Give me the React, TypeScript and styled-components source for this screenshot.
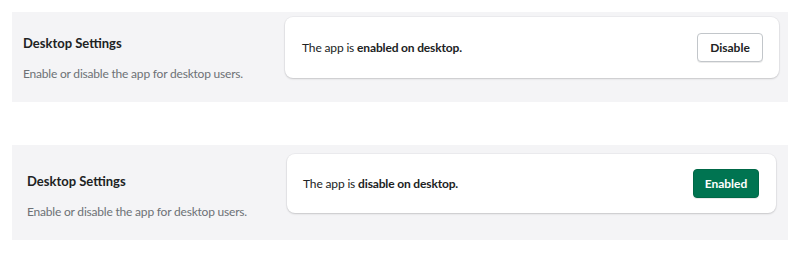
import React from "react";
import styled, { createGlobalStyle } from "styled-components";

const Global = createGlobalStyle`
  html, body { margin: 0; padding: 0; background: #ffffff; }
  body { font-family: Lato, "Open Sans", sans-serif; color: #202223; }
`;

const Page = styled.div`
  display: flex;
  flex-direction: column;
  gap: 43px;
  padding: 12px 12px 0 12px;
`;

const Panel = styled.section<{ $pad: string; $side: number }>`
  display: flex;
  align-items: flex-start;
  background: #f4f4f6;
  padding: ${(p) => p.$pad};
  & > div:first-child { width: ${(p) => p.$side}px; flex: none; }
`;

const Info = styled.div<{ $top: number }>`
  display: flex;
  flex-direction: column;
  gap: 13px;
  padding-top: ${(p) => p.$top}px;
`;

const Title = styled.h2`
  margin: 0;
  font-size: 13px;
  line-height: 18px;
  font-weight: 700;
  color: #202223;
`;

const Desc = styled.p`
  margin: 0;
  font-size: 12px;
  letter-spacing: -0.2px;
  line-height: 18px;
  color: #6d7175;
`;

const Card = styled.div<{ $h: number; $pl: number; $pr: number }>`
  flex: 1;
  display: flex;
  align-items: center;
  justify-content: space-between;
  height: ${(p) => p.$h}px;
  box-sizing: border-box;
  padding: 0 ${(p) => p.$pr}px 0 ${(p) => p.$pl}px;
  background: #ffffff;
  border-radius: 8px;
  box-shadow: 0 1px 2px rgba(0, 0, 0, 0.16), 0 0 0 1px rgba(63, 63, 68, 0.04);
`;

const Status = styled.p`
  margin: 0;
  font-size: 12px;
  letter-spacing: -0.15px;
  line-height: 18px;
  color: #202223;
  & strong { font-weight: 700; }
`;

const Button = styled.button<{ $primary?: boolean }>`
  width: 66px;
  height: 29px;
  box-sizing: border-box;
  border-radius: 4px;
  font-family: inherit;
  font-size: 12px;
  font-weight: 700;
  cursor: pointer;
  ${(p) =>
    p.$primary
      ? `background: #007451; color: #ffffff; border: 1px solid #006847; box-shadow: 0 1px 0 rgba(0,0,0,0.08);`
      : `background: #ffffff; color: #202223; border: 1px solid #c2c6ca; box-shadow: 0 1px 0 rgba(0,0,0,0.08);`}
`;

export default function App() {
  return (
    <>
      <Global />
      <Page>
        <Panel $pad="5px 9px 19px 11px" $side={262}>
          <Info $top={17}>
            <Title>Desktop Settings</Title>
            <Desc>Enable or disable the app for desktop users.</Desc>
          </Info>
          <Card $h={61} $pl={17} $pr={16}>
            <Status>
              The app is <strong>enabled on desktop.</strong>
            </Status>
            <Button>Disable</Button>
          </Card>
        </Panel>
        <Panel $pad="9px 12px 19px 15px" $side={260}>
          <Info $top={18}>
            <Title>Desktop Settings</Title>
            <Desc>Enable or disable the app for desktop users.</Desc>
          </Info>
          <Card $h={59} $pl={16} $pr={17}>
            <Status>
              The app is <strong>disable on desktop.</strong>
            </Status>
            <Button $primary>Enabled</Button>
          </Card>
        </Panel>
      </Page>
    </>
  );
}
